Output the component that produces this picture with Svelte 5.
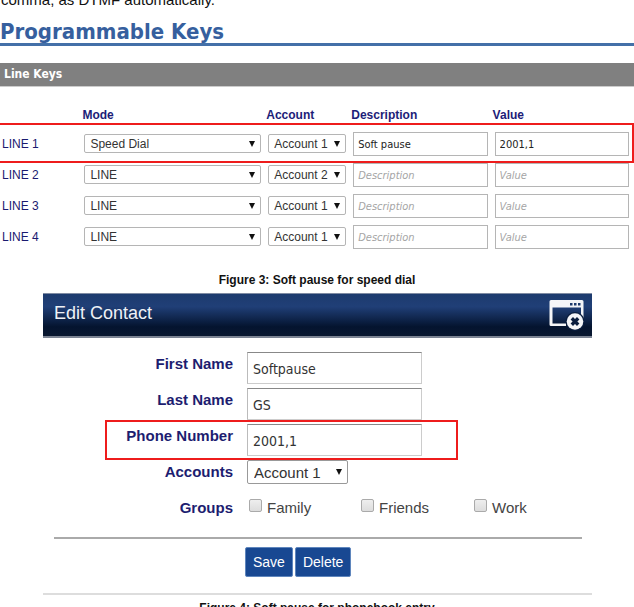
<script>
	let lines = $state([
		{ name: 'LINE 1', mode: 'Speed Dial', account: 'Account 1', description: 'Soft pause', value: '2001,1', marked: true },
		{ name: 'LINE 2', mode: 'LINE', account: 'Account 2', description: '', value: '' },
		{ name: 'LINE 3', mode: 'LINE', account: 'Account 1', description: '', value: '' },
		{ name: 'LINE 4', mode: 'LINE', account: 'Account 1', description: '', value: '' }
	]);

	let contact = $state({
		first: 'Softpause',
		last: 'GS',
		phone: '2001,1',
		account: 'Account 1'
	});

	let groups = $state([
		{ name: 'Family', checked: false },
		{ name: 'Friends', checked: false },
		{ name: 'Work', checked: false }
	]);

	const modes = ['LINE', 'Speed Dial'];
	const accounts = ['Account 1', 'Account 2'];
</script>

<main>
	<p class="intro">comma, as DTMF automatically.</p>

	<section>
		<h1>Programmable Keys</h1>
		<h2>Line Keys</h2>
		<table>
			<thead>
				<tr>
					<th class="line"></th>
					<th class="mode">Mode</th>
					<th class="account">Account</th>
					<th class="text">Description</th>
					<th class="text">Value</th>
				</tr>
			</thead>
			<tbody>
				{#each lines as line}
					<tr class:marked={line.marked}>
						<td class="name">{line.name}</td>
						<td>
							<span class="select">
								<select aria-label="{line.name} mode" bind:value={line.mode}>
									{#each modes as mode}<option>{mode}</option>{/each}
								</select>
							</span>
						</td>
						<td>
							<span class="select">
								<select aria-label="{line.name} account" bind:value={line.account}>
									{#each accounts as account}<option>{account}</option>{/each}
								</select>
							</span>
						</td>
						<td><input type="text" aria-label="{line.name} description" placeholder="Description" bind:value={line.description} /></td>
						<td><input type="text" aria-label="{line.name} value" placeholder="Value" bind:value={line.value} /></td>
					</tr>
				{/each}
			</tbody>
		</table>
	</section>

	<p class="caption">Figure 3: Soft pause for speed dial</p>

	<form class="panel" onsubmit={(e) => e.preventDefault()}>
		<header>
			<h3>Edit Contact</h3>
			<button type="button" class="close" aria-label="Close">
				<svg width="35" height="31" viewBox="0 0 35 31">
					<path fill="#f4f5f8" fill-rule="evenodd" d="M2 0H33Q34.500 0 34.500 1.500V20H32V7.500H3.500V23.500H17V26H2Q.500 26 .500 24.500V1.500Q.500 0 2 0Z" />
					<path fill="#1d3a6c" d="M21 3h2.500v2.500h-2.500zM25 3h2.500v2.500h-2.500zM29 3h2.500v2.500h-2.500z" />
					<circle cx="26" cy="21.500" r="9.500" fill="#0a1d3e" />
					<circle cx="26" cy="21.500" r="8.300" fill="#f4f5f8" />
					<path d="M22.800 18.300l6.400 6.400M29.200 18.300l-6.400 6.400" stroke="#0a1d3e" stroke-width="3.400" />
				</svg>
			</button>
		</header>

		<div class="row">
			<label for="first">First Name</label>
			<input id="first" type="text" bind:value={contact.first} />
		</div>
		<div class="row">
			<label for="last">Last Name</label>
			<input id="last" type="text" bind:value={contact.last} />
		</div>
		<div class="row marked">
			<label for="phone">Phone Number</label>
			<input id="phone" type="text" bind:value={contact.phone} />
		</div>
		<div class="row">
			<label for="accounts">Accounts</label>
			<span class="select">
				<select id="accounts" bind:value={contact.account}>
					{#each accounts as account}<option>{account}</option>{/each}
				</select>
			</span>
		</div>
		<div class="row" role="group" aria-labelledby="groups">
			<span class="label" id="groups">Groups</span>
			<div class="groups">
				{#each groups as group}
					<label><input type="checkbox" bind:checked={group.checked} />{group.name}</label>
				{/each}
			</div>
		</div>

		<div class="actions">
			<button type="submit">Save</button>
			<button type="button">Delete</button>
		</div>
	</form>

	<p class="caption">Figure 4: Soft pause for phonebook entry</p>
</main>

<style>
	:global(body) {
		margin: 0;
		background: #fff;
		overflow: hidden;
	}

	main {
		font-family: "Liberation Sans", Arial, sans-serif;
		color: #111;
	}

	p, h1, h2, h3 {
		margin: 0;
	}

	.intro {
		display: flex;
		align-items: flex-end;
		height: 8px;
		overflow: hidden;
		font-size: 15px;
		line-height: 16px;
		padding-left: 1px;
	}

	h1 {
		margin-top: 12px;
		border-bottom: 3px solid #4470a8;
		font: bold 22px/23px "DejaVu Sans Condensed", Tahoma, sans-serif;
		color: #365f9e;
	}

	h2 {
		margin-top: 17px;
		padding-left: 4px;
		background: #808080;
		border-bottom: 1px solid #ccc;
		font: bold 12px/23px "DejaVu Sans Condensed", Tahoma, sans-serif;
		color: #fff;
	}

	table {
		width: 100%;
		margin-top: 15px;
		border-collapse: collapse;
		table-layout: fixed;
		font-size: 12px;
		color: #1a1a70;
	}

	th {
		height: 26px;
		padding: 0;
		text-align: left;
		color: #1d1d78;
		vertical-align: middle;
	}

	th.line { width: 13%; }
	th.mode { width: 29%; }
	th.account { width: 13.4%; }

	td {
		height: 31px;
		padding: 0 5px 0 2px;
		vertical-align: middle;
	}

	tr {
		position: relative;
	}

	/* red frame around the entry being explained */
	tr.marked .name::after,
	.row.marked::after {
		content: "";
		position: absolute;
		border: 2px solid #ee1c1c;
		pointer-events: none;
		z-index: 1;
	}

	tr.marked .name::after {
		inset: -5px 0 -4px -2px;
	}

	input[type="text"], select {
		display: block;
		box-sizing: border-box;
		width: 100%;
		margin: 0;
		border: 1px solid #b5b5b5;
		background: #fff;
		outline: none;
	}

	td input[type="text"] {
		height: 24px;
		padding: 1px 4px 0;
		font: 11px "DejaVu Sans Condensed", Tahoma, sans-serif;
		color: #222;
	}

	input::placeholder {
		color: #a5a5a5;
		font-style: italic;
	}

	.select {
		display: block;
		position: relative;
	}

	.select::after {
		content: "";
		position: absolute;
		right: 6px;
		top: 50%;
		margin-top: -3px;
		border: 3px solid transparent;
		border-top: 6px solid #111;
		border-bottom: 0;
		pointer-events: none;
	}

	select {
		appearance: none;
		height: 19px;
		padding: 0 5px;
		border-radius: 2px;
		font: 12px "Liberation Sans", Arial, sans-serif;
		color: #333;
	}

	.caption {
		font-size: 12px;
		font-weight: bold;
		line-height: 16px;
		text-align: center;
		margin-top: 20px;
	}

	.panel {
		margin: 5px 42px 0 43px;
		border-bottom: 2px solid #ddd;
	}

	header {
		display: flex;
		justify-content: space-between;
		box-sizing: border-box;
		height: 45px;
		margin-bottom: 14px;
		padding: 0 8px 0 11px;
		border-top: 1px solid #7f8ba3;
		border-bottom: 2px solid #7c8493;
		background: linear-gradient(#1d3b6e, #203f77 30%, #04142f 78%, #0a1830);
	}

	h3 {
		font-size: 18px;
		font-weight: normal;
		line-height: 38px;
		color: #eef1f6;
	}

	.close {
		align-self: center;
		padding: 0;
		border: 0;
		background: none;
	}

	.close svg {
		display: block;
	}

	.row {
		position: relative;
		display: grid;
		grid-template-columns: 190px 1fr;
		column-gap: 14px;
		height: 36px;
	}

	.row > label, .label {
		text-align: right;
		font-size: 15px;
		font-weight: bold;
		line-height: 24px;
		color: #1d1d70;
	}

	.row input[type="text"] {
		width: 175px;
		height: 32px;
		padding: 2px 5px 0;
		border-color: #888 #ccc #ccc #bbb;
		font: 14px "DejaVu Sans Condensed", Tahoma, sans-serif;
		color: #333;
	}

	.row .select {
		width: 101px;
		height: 24px;
	}

	.row select {
		height: 24px;
		padding: 0 6px;
		border-color: #999;
		font-size: 15px;
	}

	.row.marked::after {
		inset: -4px 134px 0 62px;
	}

	.groups {
		display: grid;
		grid-template-columns: 112px 113px 1fr;
		align-items: start;
		font-size: 15px;
		line-height: 24px;
		color: #444;
	}

	.groups label {
		display: flex;
		align-items: flex-start;
		gap: 5px;
	}

	.groups input {
		appearance: none;
		box-sizing: border-box;
		width: 13px;
		height: 13px;
		margin: 3px 0 0 2px;
		border: 1px solid #aaa;
		border-radius: 2px;
		background: linear-gradient(#eee, #ddd);
	}

	.groups input:checked {
		background: #184892;
	}

	.actions {
		display: flex;
		gap: 2px;
		margin: 5px 10px 0 11px;
		padding: 8px 0 16px 191px;
		border-top: 2px solid #aaa;
	}

	.actions button {
		height: 30px;
		padding: 0 7px;
		border: 1px solid #5f86bd;
		border-radius: 2px;
		background: #184892;
		font: 14px "Liberation Sans", Arial, sans-serif;
		color: #fff;
	}

	.panel + .caption {
		margin-top: 5px;
	}
</style>
